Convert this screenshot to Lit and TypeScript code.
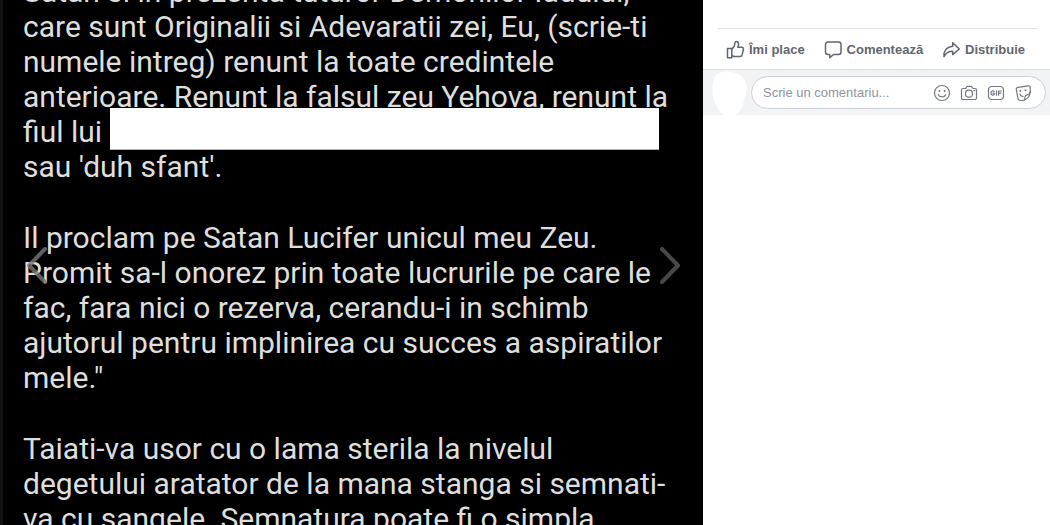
import { LitElement, html, css, svg } from "lit";
import { customElement } from "lit/decorators.js";

const PARAGRAPHS: string[][] = [
  [
    "Satan si in prezenta tuturor Demonilor Iadului,",
    "care sunt Originalii si Adevaratii zei, Eu, (scrie-ti",
    "numele intreg) renunt la toate credintele",
    "anterioare. Renunt la falsul zeu Yehova, renunt la",
    "fiul lui",
    "sau 'duh sfant'.",
  ],
  [
    "Il proclam pe Satan Lucifer unicul meu Zeu.",
    "Promit sa-l onorez prin toate lucrurile pe care le",
    "fac, fara nici o rezerva, cerandu-i in schimb",
    "ajutorul pentru implinirea cu succes a aspiratilor",
    'mele."',
  ],
  [
    "Taiati-va usor cu o lama sterila la nivelul",
    "degetului aratator de la mana stanga si semnati-",
    "va cu sangele. Semnatura poate fi o simpla",
  ],
];

const REDACTED_LINE = "fiul lui";

const likeIcon = svg`<path d="M1.500 8.500h4.300v9.300H1.500z"/><path d="M5.800 9.200C8 7.800 8.700 6 8.900 3.300c.1-1.200.6-1.800 1.400-1.800 1.500 0 2.200 1.200 2.200 2.700 0 1.100-.3 2-.7 3h3.900c1.200 0 1.900.9 1.700 1.900l-1.200 5.600c-.3 1.200-1 1.900-2.200 1.900H9c-1.300 0-2-.4-3.200-.8"/>`;
const commentIcon = svg`<path d="M4 2h10.500a2.500 2.500 0 0 1 2.500 2.500v7.500a2.500 2.500 0 0 1-2.500 2.500H9.500L5.800 17.600v-3.100H4A2.500 2.500 0 0 1 1.500 12V4.500A2.500 2.500 0 0 1 4 2z"/>`;
const shareIcon = svg`<path d="M10.700 2.700 17.300 9l-6.600 5.600v-3.400c-4.200-.1-6.600 1.300-8.700 5.400-.6-5.400 2.400-9.700 8.700-10.300z"/>`;

const tools = [
  {
    label: "Inserează un emoji",
    icon: svg`<circle cx="9" cy="9" r="7.500"/><path d="M5.300 10.700c1.500 3 5.900 3 7.400 0"/><circle class="dot" cx="6.400" cy="7" r="1"/><circle class="dot" cx="11.600" cy="7" r="1"/>`,
  },
  {
    label: "Atașează o fotografie",
    icon: svg`<path d="M3 4.500h2.500L7 2.300h4.500L13 4.500h2a1.500 1.500 0 0 1 1.500 1.500v8a1.500 1.500 0 0 1-1.500 1.500H3A1.500 1.500 0 0 1 1.500 14V6A1.500 1.500 0 0 1 3 4.500z"/><circle cx="9" cy="9.700" r="3.500"/><path d="M13.800 6.700h1"/>`,
  },
  {
    label: "Postează un GIF",
    icon: svg`<rect x="1.500" y="2.500" width="15" height="13" rx="3.500"/><path d="M7.300 7.400c-1.300-1.100-3.300-.4-3.300 1.600s2 2.700 3.300 1.500V9.200H6M9.500 6.800v4.400M11.600 11.200V7h2.800M11.600 9.100h2.300"/>`,
  },
  {
    label: "Postează un autocolant",
    icon: svg`<path d="M4 3.400 14 1.800c1.300-.2 2.100.4 2.200 1.600l.1 4.400c-.2 3.600-2.900 7.200-6.300 8.500L6.200 16.500c-1.300 0-2-.6-2.200-1.800L2.300 5.500c-.2-1.200.5-1.900 1.700-2.100z"/><path d="M16.300 7.800c-.5 2-1.600 2.600-3.200 3-1.600.3-2.100 1.200-2.100 2.500 0 1.200-.2 2.200-1 3M6 10.200c.3 1.700 1.500 2.400 3 2.200"/><circle class="dot" cx="6.400" cy="7" r="1"/><circle class="dot" cx="11.500" cy="6.300" r="1"/>`,
  },
];

@customElement("app-root")
export class AppRoot extends LitElement {
  static styles = css`
    :host {
      display: grid;
      grid-template-columns: minmax(0, 1fr) 347px;
      height: 100vh;
      overflow: hidden;
      background: #fff;
      font-family: "Liberation Sans", Arial, sans-serif;
    }
    * {
      box-sizing: border-box;
    }
    button {
      margin: 0;
      padding: 0;
      border: 0;
      background: none;
      font: inherit;
      color: inherit;
      cursor: pointer;
    }
    svg {
      display: block;
      fill: none;
      stroke: currentColor;
      stroke-linecap: round;
      stroke-linejoin: round;
    }
    .dot {
      fill: currentColor;
      stroke: none;
    }
    .viewer {
      position: relative;
      overflow: hidden;
      background: #000;
      border-left: 3px solid #141414;
    }
    .post {
      margin-top: -26px;
      padding-left: 20px;
      color: #dedede;
      font-family: Roboto, sans-serif;
      font-size: 30px;
      line-height: 35px;
      white-space: nowrap;
    }
    .post p {
      margin: 0 0 36px;
    }
    .line {
      display: block;
      position: relative;
    }
    .redaction {
      position: absolute;
      top: -6px;
      left: 87px;
      right: 44px;
      height: 42px;
      background: #fff;
      border-bottom: 1px solid #b5b5b5;
    }
    .nav {
      position: absolute;
      top: 246px;
      color: #787878;
      opacity: 0.6;
    }
    .nav svg {
      stroke-width: 4;
    }
    .prev {
      left: 22px;
      opacity: 0.8;
    }
    .next {
      right: 21px;
    }
    .side {
      padding-top: 28px;
    }
    .actions {
      display: flex;
      justify-content: space-between;
      margin: 0 13px 0 15px;
      padding: 0 12px 0 8px;
      height: 41px;
      border-top: 1px solid #dadde1;
      color: #606770;
      font-size: 13px;
      font-weight: 700;
    }
    .action {
      display: flex;
      align-items: center;
      gap: 4px;
    }
    .action svg {
      stroke-width: 1.5;
    }
    .composer {
      display: flex;
      align-items: center;
      gap: 4px;
      height: 46px;
      padding: 0 4px 0 9px;
      border-top: 1px solid #dadde1;
      background: #f2f3f5;
    }
    .avatar {
      flex: none;
      width: 35px;
      height: 44px;
      align-self: flex-end;
      fill: #fff;
      stroke: none;
    }
    .field {
      flex: 1;
      min-width: 0;
      display: flex;
      align-items: center;
      gap: 9px;
      height: 33px;
      padding: 0 13px 0 11px;
      border: 1px solid #ccd0d5;
      border-radius: 17px;
      background: #fff;
      color: #737982;
    }
    .field input {
      flex: 1;
      min-width: 0;
      padding: 0;
      border: 0;
      outline: 0;
      background: none;
      font: 13px "Liberation Sans", Arial, sans-serif;
      color: #1c1e21;
    }
    .field input::placeholder {
      color: #90949c;
      opacity: 1;
    }
    .tool svg {
      stroke-width: 1.200;
    }
  `;

  private action(icon: unknown, label: string) {
    return html`<button class="action" type="button">
      <svg width="19" height="19" viewBox="0 0 19 19" aria-hidden="true">${icon}</svg>
      <span>${label}</span>
    </button>`;
  }

  private line(text: string) {
    return html`<span class="line">${text}${text === REDACTED_LINE ? html`<span class="redaction"></span>` : ""}</span>`;
  }

  render() {
    return html`
      <main class="viewer">
        <div class="post">
          ${PARAGRAPHS.map((lines) => html`<p>${lines.map((l) => this.line(l))}</p>`)}
        </div>
        <button class="nav prev" type="button" aria-label="Înapoi">
          <svg width="24" height="39" viewBox="0 0 24 39"><path d="M20 3 4 19.500 20 36" /></svg>
        </button>
        <button class="nav next" type="button" aria-label="Înainte">
          <svg width="24" height="39" viewBox="0 0 24 39"><path d="M4 3 20 19.500 4 36" /></svg>
        </button>
      </main>
      <aside class="side">
        <div class="actions">
          ${this.action(likeIcon, "Îmi place")}
          ${this.action(commentIcon, "Comentează")}
          ${this.action(shareIcon, "Distribuie")}
        </div>
        <form class="composer" @submit=${(e: Event) => e.preventDefault()}>
          <svg class="avatar" viewBox="0 0 35 44" aria-hidden="true">
            <path d="M8 2C12 0 18 0 23 2c6 1 10 6 12 13 0 6-3 12-4 19-2 5-5 9-9 10h-9C7 41 5 36 2 30 0 24 0 17 1 11 2 6 4 3 8 2z" />
          </svg>
          <div class="field">
            <input type="text" aria-label="Scrie un comentariu" placeholder="Scrie un comentariu..." />
            ${tools.map(
              (t) => html`<button class="tool" type="button" aria-label=${t.label}>
                <svg width="18" height="18" viewBox="0 0 18 18" aria-hidden="true">${t.icon}</svg>
              </button>`
            )}
          </div>
        </form>
      </aside>
    `;
  }
}
